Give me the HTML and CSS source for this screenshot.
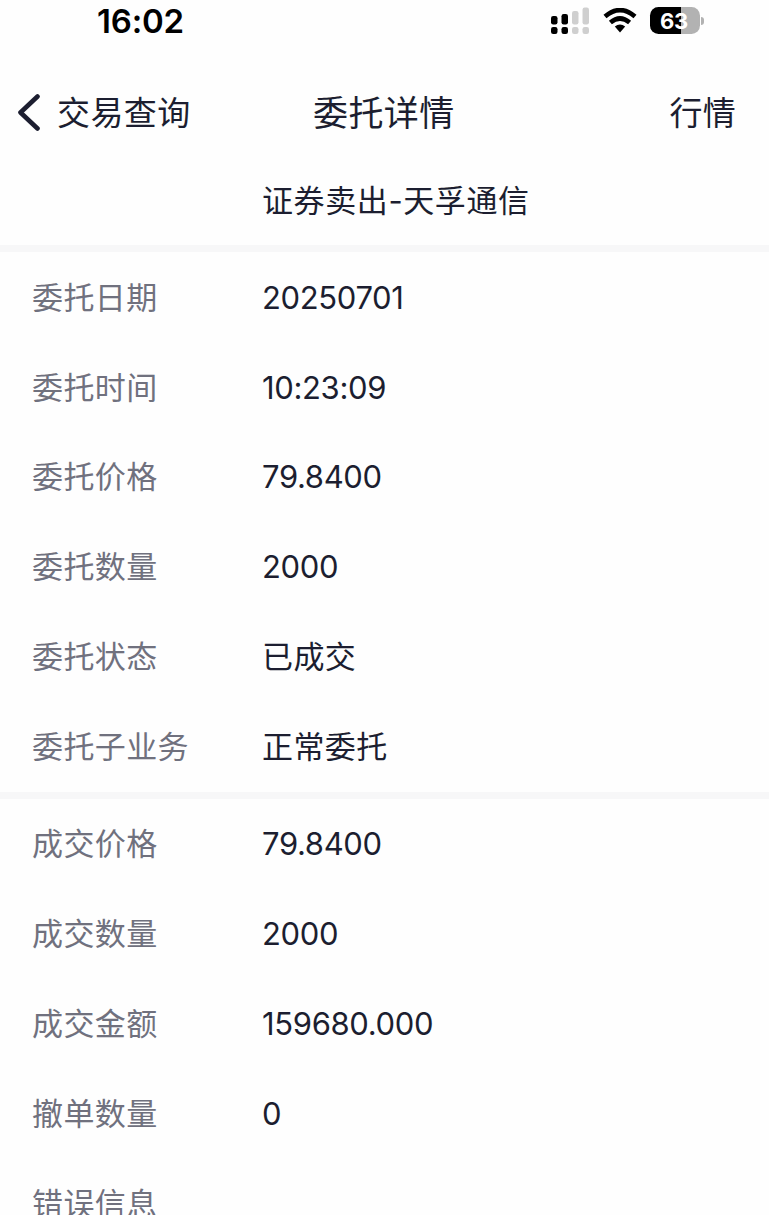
FILE: index.html
```html
<!DOCTYPE html>
<html lang="zh-CN">
<head>
<meta charset="utf-8">
<title>委托详情</title>
<link rel="stylesheet" href="styles.css">
</head>
<body>
<div class="screen">
  <div class="status">
    <span class="clock">16:02</span>
    <div class="status-icons">
      <svg class="signal" width="38" height="27" viewBox="0 0 38 27">
        <rect x="0" y="9" width="6.5" height="8.5" rx="2.2"/>
        <rect x="10.5" y="7" width="6.5" height="10.5" rx="2.2"/>
        <g class="dim"><rect x="21" y="4" width="6.5" height="13.5" rx="2.2"/>
        <rect x="31.5" y="0.5" width="6.5" height="17" rx="2.2"/></g>
        <rect x="0" y="20" width="6.5" height="7" rx="2.2"/>
        <rect x="10.5" y="20" width="6.5" height="7" rx="2.2"/>
        <g class="dim"><rect x="21" y="20" width="6.5" height="7" rx="2.2"/>
        <rect x="31.5" y="20" width="6.5" height="7" rx="2.2"/></g>
      </svg>
      <svg class="wifi" width="34" height="25" viewBox="0 0 34 25">
        <path class="arc" d="M2 8.6Q17-4.4 32 8.6M7.4 14.6Q17 6.4 26.6 14.6"/>
        <path d="M11.8 18.6Q17 14.2 22.2 18.6L17 24.4Z"/>
      </svg>
      <div class="battery"><span class="cell">63</span><span class="cap"></span></div>
    </div>
  </div>
  <header class="nav">
    <a class="back">
      <svg width="24" height="38" viewBox="0 0 24 38"><path d="M20.5 2.500L3.500 18.500L20.500 34.500"/></svg>
      <span>交易查询</span>
    </a>
    <h1 class="title">委托详情</h1>
    <a class="quote">行情</a>
  </header>
  <dl class="group lead">
    <div class="row"><dt></dt><dd>证券卖出-天孚通信</dd></div>
  </dl>
  <dl class="group">
    <div class="row"><dt>委托日期</dt><dd class="num">20250701</dd></div>
    <div class="row"><dt>委托时间</dt><dd class="num">10:23:09</dd></div>
    <div class="row"><dt>委托价格</dt><dd class="num">79.8400</dd></div>
    <div class="row"><dt>委托数量</dt><dd class="num">2000</dd></div>
    <div class="row"><dt>委托状态</dt><dd>已成交</dd></div>
    <div class="row"><dt>委托子业务</dt><dd>正常委托</dd></div>
  </dl>
  <dl class="group">
    <div class="row"><dt>成交价格</dt><dd class="num">79.8400</dd></div>
    <div class="row"><dt>成交数量</dt><dd class="num">2000</dd></div>
    <div class="row"><dt>成交金额</dt><dd class="num">159680.000</dd></div>
    <div class="row"><dt>撤单数量</dt><dd class="num">0</dd></div>
    <div class="row"><dt>错误信息</dt><dd></dd></div>
  </dl>
</div>
</body>
</html>
```
FILE: styles.css
```css
* { box-sizing: border-box; }
body {
  margin: 0;
  background: #fefefe;
  color: #1c1e30;
  font-family: Inter, "Noto Sans CJK SC", sans-serif;
}
.screen { height: 1215px; overflow: hidden; }
.status {
  display: flex;
  justify-content: space-between;
  height: 44px;
  padding: 0 65px 0 97px;
  color: #000;
}
.clock { font-size: 33px; font-weight: 600; line-height: 43px; letter-spacing: -0.2px; }
.status-icons { display: flex; align-items: flex-start; padding-top: 7px; }
.signal { margin-right: 14px; }
.dim { fill: #cfcfcf; }
.wifi { margin: 1px 13px 0 0; }
.arc { fill: none; stroke: #000; stroke-width: 4.6; }
.battery { display: flex; align-items: center; gap: 1px; }
.cell {
  width: 50px;
  height: 27px;
  padding-right: 2px;
  border-radius: 8.5px;
  background: linear-gradient(90deg, #000 31px, #b2b2b2 31px);
  color: #fff;
  font-size: 22px;
  font-weight: 700;
  line-height: 28px;
  letter-spacing: -0.3px;
  text-align: center;
}
.cap { width: 3px; height: 8px; border-radius: 0 3px 3px 0; background: #b2b2b2; }
.nav {
  display: grid;
  grid-template-columns: 296px 1fr auto;
  align-items: center;
  height: 111px;
  padding: 26px 33px 0 17px;
  line-height: 50px;
}
.back { display: flex; align-items: center; gap: 16px; font-size: 33px; letter-spacing: 0.4px; }
.back path { fill: none; stroke: #1c1e30; stroke-width: 4.6; stroke-linecap: round; stroke-linejoin: round; }
.title { margin: 0; font-size: 35px; font-weight: 400; letter-spacing: 0.4px; }
.quote { font-size: 33px; letter-spacing: 0.2px; }
.group { margin: 0; border-top: 7px solid #f7f7f8; }
.lead { border-top: 0; }
.lead .row { letter-spacing: 0.6px; padding-top: 2px; }
.group + .group { padding-top: 0.3px; }
.row {
  display: flex;
  align-items: center;
  height: 89.9px;
  padding: 1px 0 0 32px;
  font-size: 31px;
  line-height: 44px;
  letter-spacing: 0.4px;
}
dt { width: 230px; color: #70717e; }
dd { margin: 0; }
.num { letter-spacing: -0.35px; }
```
